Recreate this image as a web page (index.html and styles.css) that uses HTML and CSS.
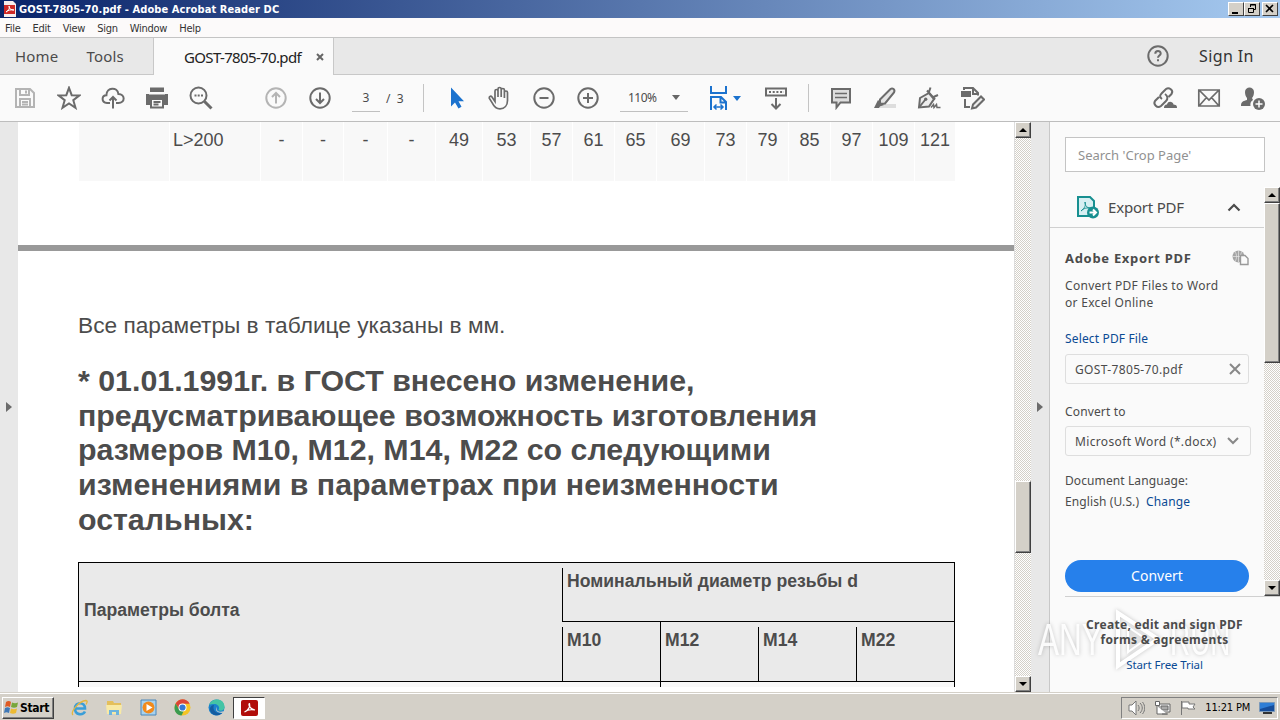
FILE: index.html
```html
<!DOCTYPE html>
<html lang="en">
<head>
    <meta charset="UTF-8">
    <meta name="viewport" content="width=device-width, initial-scale=1.0">
    <title>GOST-7805-70.pdf - Adobe Acrobat Reader DC</title>
    <link rel="stylesheet" href="styles.css">
</head>
<body>

<!-- Title Bar -->
<div class="titlebar">
    <svg class="app-icon" width="12" height="16" viewBox="0 0 12 16"><path fill="#f7eeee" d="M0 0h9l3 3v13H0z"/><path fill="#cf2a27" d="M0 4h11v9H0z"/><path fill="none" stroke="#fff" d="M2 11c3-2 4-4 3-6 0 3 2 4 5 4-3-.5-6 0-8 2z"/></svg>
    <span class="title-text">GOST-7805-70.pdf - Adobe Acrobat Reader DC</span>
    <div class="win-buttons">
        <span class="win-btn"><svg width="13" height="12"><path d="M3 9h6v2H3z"/></svg></span>
        <span class="win-btn"><svg width="13" height="12"><path fill="none" stroke="#000" d="M5.500 4V1.500h5v5H9M5 2h6M3.500 5.500h5v4h-5zM3 5.500h6"/></svg></span>
        <span class="win-btn close"><svg width="13" height="12"><path fill="none" stroke="#000" stroke-width="1.600" d="M3 2l7 7M10 2L3 9"/></svg></span>
    </div>
</div>

<!-- Menu -->
<div class="menubar">
    <span>File</span><span>Edit</span><span>View</span><span>Sign</span><span>Window</span><span>Help</span>
</div>

<!-- Tabs -->
<div class="tabs">
    <div class="tabs-left"><span class="home">Home</span><span class="tools-tab">Tools</span></div>
    <div class="tab-active"><span class="tab-name">GOST-7805-70.pdf</span><svg width="8" height="8" viewBox="0 0 8 8"><path d="M1 1l6 6M7 1L1 7" stroke="#666" stroke-width="2"/></svg></div>
    <div class="tabs-right">
        <svg class="ico" width="24" height="24" viewBox="0 0 24 24"><circle cx="12" cy="12" r="9.700"/><path d="M9.300 9.700c0-3.500 5.400-3.500 5.400-.2 0 2-2.700 2.200-2.700 4.300M12 15.300v2"/></svg>
        <span class="signin">Sign In</span>
    </div>
</div>

<!-- Toolbar -->
<div class="toolbar">
    <div class="tool-group files">
        <span class="tool light"><svg class="ico" width="24" height="24" viewBox="0 0 24 24"><path d="M3 3h14l4 4v14H3zM7 3v6h9V3M7 21v-8h10v8M13 4.500v3M9 16h6M9 18.500h6"/></svg></span>
        <span class="tool"><svg class="ico" width="24" height="24" viewBox="0 0 24 24"><path d="M12 1.800l2.700 7.400 7.800.2-6.200 4.800 2.200 7.600L12 17.400l-6.500 4.400 2.200-7.600L1.500 9.400l7.800-.2z"/></svg></span>
        <span class="tool"><svg class="ico" width="24" height="24" viewBox="0 0 24 24"><path d="M9 17H6c-6-.5-5.500-7.600-.6-7.800C5.500 1 16.500.500 17.400 8c7 .2 7 9 0 9H15M12 22.500V11M8.500 14.500L12 11l3.500 3.500"/></svg></span>
        <span class="tool"><svg class="ico" width="24" height="24" viewBox="0 0 24 24"><path class="solid" d="M5 1.500h14V6H5zM1 8h22v11h-4v-4H5v4H1z"/><path fill="#fafafa" d="M6 13h12v8.500H6z"/><path class="cut" d="M4 8h16"/><path d="M8.500 16h7M8.500 18.500h5"/></svg></span>
        <span class="tool"><svg class="ico" width="24" height="24" viewBox="0 0 24 24"><circle cx="9.500" cy="9.500" r="8"/><path d="M5.500 9.500h2M8.700 9.500h2M12 9.500h2"/><path stroke-width="3" d="M15.500 15.500l7 7"/></svg></span>
    </div>
    <div class="tool-group nav">
        <span class="tool light"><svg class="ico" width="24" height="24" viewBox="0 0 24 24"><circle cx="12" cy="12" r="9.700"/><path d="M12 17.500V7M8 11l4-4 4 4"/></svg></span>
        <span class="tool"><svg class="ico" width="24" height="24" viewBox="0 0 24 24"><circle cx="12" cy="12" r="9.700"/><path d="M12 6.500V17M8 13l4 4 4-4"/></svg></span>
        <span class="page-input">3</span><span class="page-total">/&nbsp; 3</span>
    </div>
    <span class="sep"></span>
    <div class="tool-group view">
        <span class="tool"><svg width="24" height="24" viewBox="0 0 24 24"><path fill="#1b72ce" d="M7 1.500v19l4-4 3.500 6 3-1.700-3-5.500H20z"/></svg></span>
        <span class="tool"><svg class="ico" width="24" height="24" viewBox="0 0 24 24"><path stroke-width="1.700" d="M7 15.500V5c0-2 3-2 3 0v6V3c0-2 3.200-2 3.200 0v8V4c0-2 3.200-2 3.200 0v8V6.500c0-2 3.100-2 3.100 0v8c0 5-3 8.300-7.500 8.300-4 0-6-2.300-7.500-5.500L1.400 12.500c-.6-2 1.300-3 2.600-1.500z"/></svg></span>
        <span class="tool"><svg class="ico" width="24" height="24" viewBox="0 0 24 24"><circle cx="12" cy="12" r="9.700"/><path d="M7.500 12h9"/></svg></span>
        <span class="tool"><svg class="ico" width="24" height="24" viewBox="0 0 24 24"><circle cx="12" cy="12" r="9.700"/><path d="M7 12h10M12 7v10"/></svg></span>
        <span class="zoom-box"><span>110%</span><i class="caret"></i></span>
        <span class="fit"><svg width="20" height="26" viewBox="0 0 20 26" fill="none" stroke="#1b72ce" stroke-width="2"><path d="M2 1v7h15V1M2 25V12h10l5 5v8M11.500 12v5.500H17"/><path stroke-width="1.500" d="M5 22h9M7.500 19.500L5 22l2.500 2.500M11.500 19.500L14 22l-2.500 2.500"/></svg><i class="caret blue"></i></span>
        <span class="tool"><svg class="ico" width="24" height="24" viewBox="0 0 24 24"><path d="M2 2.500h20v7H2zM12 12v10M7.500 18l4.500 4.500 4.500-4.500"/><path stroke-dasharray="2 1.700" d="M5 6h15"/></svg></span>
    </div>
    <span class="sep"></span>
    <div class="tool-group edit">
        <span class="tool"><svg class="ico" width="24" height="24" viewBox="0 0 24 24"><path fill="#ddd" d="M3 3h18v13.500H11.500l-4 5v-5H3z"/><path stroke-width="1.500" d="M6 7.500h12M6 11.500h12"/></svg></span>
        <span class="tool"><svg class="ico" width="24" height="24" viewBox="0 0 24 24"><path fill="#ddd" stroke="none" d="M11 18h12v4H6z"/><path fill="#e4e4e4" d="M7 13.500L17.500 3c2-1.500 5 .5 3.500 3.500L12 17.500l-5 .5z"/><path class="solid" d="M5 14l6 5-4 1.500-1 1.500H1z"/></svg></span>
        <span class="tool"><svg class="ico" width="24" height="24" viewBox="0 0 24 24"><path fill="#eee" d="M2 21.500L3 12l9-5 5 6-5 7.500z"/><path d="M2 21.500l6-7.500M10 4.500l8 9M12 6l1.500-4.500M16.500 11L21 9"/><circle class="solid" cx="8.700" cy="13.300" r="1.700"/><path stroke-width="1.500" d="M14 21.500l2.500-3 .5 3 2.500-3 .5 3h3.500"/></svg></span>
        <span class="tool"><svg class="ico" width="24" height="24" viewBox="0 0 24 24"><path class="solid" d="M0 5h10v6H0z"/><path d="M3 4V2h9l5 5v2.500M12 2v6h5M4 13v8h5"/><path fill="#eee" d="M12 18.500l8-8 3 3-8 8-4 1z"/></svg></span>
    </div>
    <div class="tool-group share">
        <span class="tool"><svg class="ico" width="26" height="24" viewBox="0 0 26 24"><path d="M10 13c-3-2-2-4 0-6l4-4c3-2 8 1 5.500 5l-3 3M13 8c3 2 3 5 1 7l-5 5c-4 3-8-2-6-5l4-4"/><path class="solid" d="M12 22c0-3 2-3.500 3-3.500 1-4 6-3 6.500 0C25 19 25 20 25 22z"/></svg></span>
        <span class="tool"><svg class="ico" width="24" height="24" viewBox="0 0 24 24"><path stroke-width="1.700" d="M1.800 4h20.400v16H1.800zM2 4l10 10L22 4M2 20l7.500-8.500M22 20l-7.500-8.500"/></svg></span>
        <span class="tool"><svg class="ico" width="26" height="24" viewBox="0 0 26 24"><path class="solid" d="M5 6c0-6 9-6 9 0 0 3-1 5-2 6l1 2c-2 1-3 3-2.500 6H1c0-5 3-5 6-6v-2C6 11 5 9 5 6z"/><circle class="solid" cx="19" cy="18" r="6"/><path stroke="#fff" stroke-width="1.500" d="M19 14.500v7M15.500 18h7"/></svg></span>
    </div>
</div>

<div class="main">
    <div class="gutter left"><i class="arrow-r"></i></div>

    <!-- Document -->
    <div class="document">
        <div class="size-row">
            <span></span><span class="first">L&gt;200</span><span>-</span><span>-</span><span>-</span><span>-</span><span>49</span><span>53</span><span>57</span><span>61</span><span>65</span><span>69</span><span>73</span><span>79</span><span>85</span><span>97</span><span>109</span><span>121</span>
        </div>
        <div class="page-break"></div>
        <p class="note">Все параметры в таблице указаны в мм.</p>
        <h2>* 01.01.1991г. в ГОСТ внесено изменение,<br>предусматривающее возможность изготовления<br>размеров М10, М12, М14, М22 со следующими<br>изменениями в параметрах при неизменности<br>остальных:</h2>
        <div class="bolt-table">
            <div class="param">Параметры болта</div>
            <div class="diameter">Номинальный диаметр резьбы d</div>
            <div class="m">М10</div><div class="m joined">М12</div><div class="m">М14</div><div class="m">М22</div>
        </div>
        <div class="bolt-next"><span></span></div>
    </div>
    <div class="scrollbar doc-scroll">
        <span class="sb-btn"><i class="up"></i></span>
        <span class="thumb"></span>
        <span class="sb-btn bottom"><i class="down"></i></span>
    </div>
    <div class="gutter right"><i class="arrow-r"></i></div>

    <!-- Right Panel -->
    <div class="panel">
        <div class="search">Search 'Crop Page'</div>
        <div class="panel-body">
            <div class="panel-content">
                <div class="export-head">
                    <svg width="24" height="24" viewBox="0 0 24 24"><path d="M2 2h12l4 4v15H2z" fill="#d7eff2" stroke="#178f90" stroke-width="2"/><path d="M5 16c4-3 5-6 4-9 0 4 2 6 6 6-4-.5-7 0-10 3z" fill="none" stroke="#178f90"/><circle cx="17" cy="17.500" r="6" fill="#178f90"/><path d="M13.500 17.500h6M17 14.500l3 3-3 3" stroke="#fff" stroke-width="2" fill="none"/></svg>
                    <span>Export PDF</span>
                    <svg class="chev" width="14" height="9" viewBox="0 0 14 9"><path d="M1.500 7.500L7 2l5.500 5.500" fill="none" stroke="#4b4b4b" stroke-width="2.200"/></svg>
                </div>
                <div class="export-form">
                    <div class="form-title"><b>Adobe Export PDF</b><svg width="17" height="16" viewBox="0 0 17 16"><circle cx="6.500" cy="6.500" r="6" fill="#a5a5a5"/><path d="M.5 6.500h12M6.500 0v12M3 1.500c2 3 2 7 0 10M10 1.500c-2 3-2 7 0 10" stroke="#e6e6e6" stroke-width=".7" fill="none"/><path d="M8.500 5.500H13l3 3v6H8.500z" fill="#fafafa" stroke="#999" stroke-width="1.400"/></svg></div>
                    <p class="intro">Convert PDF Files to Word<br>or Excel Online</p>
                    <a class="select-link">Select PDF File</a>
                    <div class="field file"><span>GOST-7805-70.pdf</span><svg width="12" height="12" viewBox="0 0 12 12"><path d="M1 1l10 10M11 1L1 11" stroke="#888" stroke-width="2"/></svg></div>
                    <p class="label">Convert to</p>
                    <div class="field format"><span>Microsoft Word (*.docx)</span><svg width="12" height="8" viewBox="0 0 12 8"><path d="M1 1l5 5 5-5" fill="none" stroke="#888" stroke-width="2"/></svg></div>
                    <p class="language">Document Language:<br><span>English (U.S.)</span><a>Change</a></p>
                    <div class="convert">Convert</div>
                </div>
            </div>
            <div class="scrollbar side-scroll">
                <span class="sb-btn"><i class="up"></i></span>
                <span class="thumb"></span>
                <span class="sb-btn bottom"><i class="down"></i></span>
            </div>
        </div>
        <div class="promo">
            <b>Create, edit and sign PDF<br>forms &amp; agreements</b>
            <a>Start Free Trial</a>
        </div>
    </div>
</div>

<!-- Watermark -->
<div class="watermark">
    <span>ANY</span>
    <svg width="48" height="64" viewBox="0 0 48 64"><path d="M4 5l40 26L4 58z" fill="none" stroke="#fff" stroke-width="4"/><path d="M14 19l18 12-18 13z" fill="rgba(225,225,225,.4)" stroke="#fff" stroke-width="2"/></svg>
    <span>RUN</span>
</div>

<!-- Taskbar -->
<div class="taskbar">
    <div class="start"><svg width="15" height="15" viewBox="0 0 15 15"><path fill="#df5b24" d="M2 2c2-1.500 4-1 5 0L6 7C4 6 3 6 1 7z"/><path fill="#78a63a" d="M8 2.500c2 1 4 1 6 0L13 7c-2 1-4 1-6 0z"/><path fill="#3f78b7" d="M1 8c2-1 3-1 5 0l-1 5c-2-1-3-1-5 0z"/><path fill="#edba32" d="M7 8.500c2 1 4 1 6 0L12 13c-2 1-4 1-6 0z"/></svg><b>Start</b></div>
    <div class="quick">
        <span><svg width="18" height="18" viewBox="0 0 18 18"><path d="M14 12.500c-2 4-10 4-10-3 0-7 10-7 10 0H5" fill="none" stroke="#3a9ed8" stroke-width="2.600"/><path d="M2 16C-1 13 8 2 15 1.500c2 .5 1 2 0 4" fill="none" stroke="#e5b63e" stroke-width="1.300"/></svg></span>
        <span><svg width="18" height="18" viewBox="0 0 18 18"><path fill="#e4bf5b" d="M2 2h6l1 2h7v11H2z"/><path fill="#f8e9a5" d="M1 6h16l-1 9H2z"/><path fill="#6fb4dd" d="M4 16v-5h10v5h-3v-3H7v3z"/></svg></span>
        <span><svg width="17" height="17" viewBox="0 0 17 17"><path fill="#a6d1ee" stroke="#4a86b8" d="M1 1h15v15H1z"/><circle cx="8.500" cy="8.500" r="6" fill="#f18a1c"/><path fill="#fff" d="M6.500 5l6 3.500-6 3.500z"/></svg></span>
        <span><svg width="17" height="17" viewBox="0 0 17 17"><circle cx="8.500" cy="8.500" r="8" fill="#f4c426"/><path fill="#db4437" d="M1.600 4.500C5-1.500 13-1 15.600 4.700H8.500L5 10z"/><path fill="#3b9b50" d="M1.600 4.500L5.500 11l4 1.500-2 4C1 16-1 9.500 1.600 4.500z"/><circle cx="8.500" cy="8.500" r="4" fill="#fff"/><circle cx="8.500" cy="8.500" r="3.100" fill="#3478d4"/></svg></span>
        <span><svg width="17" height="17" viewBox="0 0 17 17"><circle cx="8.500" cy="8.500" r="8" fill="#1b81cc"/><path fill="#44c4a5" d="M1 6C4-2 17-1 16.500 8.500c0 3-4 4-6 2.500 2-3-1-6-4-6-2 0-4 0-5.500 1z"/><path fill="#155ca0" d="M6 6c-2 5 2 9 8 8-5 5-13 1-12-5 1-2 2-3 4-3z"/><path fill="#d5d0c8" d="M9 8c-2 4 3 6 7 4l-1.500 2C10 14 6 11 9 8z"/></svg></span>
        <span class="running"><svg width="17" height="16" viewBox="0 0 17 16"><rect width="17" height="16" rx="2" fill="#b10d0a"/><path d="M3.500 12c4-1.500 6-6 5-8.500-1.500 0 0 6 5.500 6.500-4-1-8 0-10.500 2z" fill="none" stroke="#fff" stroke-width="1.200"/></svg></span>
    </div>
    <div class="tray">
        <svg width="17" height="16" viewBox="0 0 17 16" fill="none" stroke="#777"><path fill="#fff" d="M1 5h3l4-4v14l-4-4H1z"/><path d="M10 5c1.500 2 1.500 4 0 6M12 3c3 3 3 7 0 10M14.500 2c3 4 3 8 0 12"/></svg>
        <svg width="17" height="16" viewBox="0 0 17 16" stroke="#666"><path fill="#eee" d="M5 4h11v8H5z"/><path fill="#aaa" d="M7 6h7v4H7z"/><path fill="#fff" d="M1.500 1.500h4v4h-4zM3 6v8h10M8 14h6"/></svg>
        <svg width="17" height="16" viewBox="0 0 17 16" stroke="#777"><path fill="#fff" d="M1.500 1v14M2 2h7v2h6l-2 3 2 2H8V8H2z"/></svg>
        <span>11:21 PM</span>
        <svg width="16" height="14" viewBox="0 0 16 14"><path fill="#2f7ed6" stroke="#7a99ba" d="M.5 1.500h15v9H.5z"/><path fill="#174d9a" d="M1 8l14-4v6H1z"/><path fill="#333" d="M4 11h9v2H4z"/></svg>
    </div>
</div>

</body>
</html>
```
FILE: styles.css
```css
/* Basic Reset */
* {
    box-sizing: border-box;
    margin: 0;
    padding: 0;
}

body {
    width: 1280px;
    height: 720px;
    overflow: hidden;
    display: flex;
    flex-direction: column;
    background-color: #fafafa;
    color: #4b4b4b;
    font-family: "Noto Sans", sans-serif;
    white-space: nowrap;
}

svg {
    display: block;
    flex: none;
}

/* Title Bar */
.titlebar {
    height: 18px;
    display: flex;
    align-items: center;
    padding: 0 2px 0 4px;
    background: linear-gradient(90deg, #0a246a, #a6caf0);
    color: #fff;
}

.title-text {
    margin-left: 3px;
    font: bold 11px "DejaVu Sans Condensed", "DejaVu Sans", sans-serif;
    font-stretch: condensed;
    letter-spacing: 0.1px;
}

.win-buttons {
    display: flex;
    margin-left: auto;
}

.win-btn {
    width: 16px;
    height: 14px;
    background-color: #d4d0c8;
    border: 1px solid;
    border-color: #fff #404040 #404040 #fff;
}

.win-btn.close {
    margin-left: 2px;
}

/* Menu */
.menubar {
    height: 20px;
    display: flex;
    gap: 12px;
    padding: 3px 0 0 5px;
    border-bottom: 1px solid #c4c4c4;
    background-color: #fcfafa;
    font: 11px/15px "DejaVu Sans Condensed", "DejaVu Sans", sans-serif;
    font-stretch: condensed;
    letter-spacing: -0.25px;
    color: #333;
}

/* Tabs */
.tabs {
    height: 37px;
    display: flex;
    font-size: 16px;
    line-height: 36px;
    background-color: #e8e8e8;
}

.tabs-left {
    width: 154px;
    padding-left: 15px;
    border-right: 1px solid #c8c8c8;
    border-bottom: 1px solid #c8c8c8;
}

.tools-tab {
    margin-left: 28px;
}

.home,
.tools-tab {
    font-size: 15px;
    letter-spacing: 0.2px;
}

.tab-active {
    width: 179px;
    display: flex;
    align-items: center;
    padding-left: 30px;
    background-color: #fafafa;
    color: #222;
    font-size: 15px;
}

.tab-active svg {
    margin-left: 14px;
}

.tab-name {
    width: 118px;
    letter-spacing: -0.65px;
}

.tabs-right {
    flex: 1;
    display: flex;
    align-items: center;
    justify-content: flex-end;
    padding-right: 26px;
    border-left: 1px solid #c8c8c8;
    border-bottom: 1px solid #c8c8c8;
}

.tabs-right .ico {
    margin-right: 29px;
}

.signin {
    width: 55px;
    font-size: 16px;
    letter-spacing: 0.4px;
    color: #333;
}

/* Toolbar */
.toolbar {
    height: 47px;
    display: flex;
    align-items: center;
    border-bottom: 1px solid #bdbdbd;
    background-color: #fafafa;
}

.ico {
    fill: none;
    stroke: #6b6b6b;
    stroke-width: 2;
}

.ico .solid {
    fill: #6b6b6b;
    stroke: none;
}

.ico .cut {
    stroke: #fafafa;
    stroke-width: 1;
}

.light .ico {
    stroke: #b4b4b4;
}

.tool-group {
    display: flex;
    align-items: center;
}

.tool {
    width: 44px;
    display: flex;
    justify-content: center;
}

.files {
    padding-left: 3px;
}

.nav {
    width: 200px;
    padding-left: 31px;
    font-size: 12px;
}

.page-input {
    width: 28px;
    height: 27px;
    margin-left: 10px;
    line-height: 25px;
    text-align: center;
    border-bottom: 1px solid #c0c0c0;
}

.page-total {
    margin-left: 6px;
}

.sep {
    width: 1px;
    height: 28px;
    background-color: #c4c4c4;
}

.view {
    width: 384px;
    padding-left: 10px;
}

.zoom-box {
    width: 68px;
    height: 28px;
    display: flex;
    align-items: center;
    justify-content: space-between;
    margin-left: 10px;
    padding: 0 8px;
    border-bottom: 1px solid #c0c0c0;
    font-size: 12px;
    letter-spacing: -0.5px;
}

.caret {
    border: 4px solid transparent;
    border-top: 5px solid #666;
    border-bottom: 0;
}

.caret.blue {
    border-top-color: #1b72ce;
}

.fit {
    width: 66px;
    display: flex;
    align-items: center;
    gap: 4px;
    padding-left: 21px;
}

.edit {
    padding-left: 10px;
}

.share {
    margin-left: auto;
    padding-right: 5px;
}

/* Main Area */
.main {
    height: 570px;
    display: flex;
}

.gutter {
    width: 18px;
    display: flex;
    align-items: center;
    justify-content: center;
    background-color: #e8e8e8;
}

.gutter.right {
    width: 19px;
    border-right: 1px solid #c8c8c8;
}

.arrow-r {
    border: 5px solid transparent;
    border-left: 6px solid #6b6b6b;
    border-right: 0;
}

/* Document */
.document {
    width: 996px;
    overflow: hidden;
    background-color: #fff;
    font-family: "Liberation Sans", Arial, sans-serif;
    color: #4c4c4c;
}

.size-row {
    height: 59px;
    display: grid;
    grid-template-columns: 91px 91px 42px 41px 44px 48px 47px 48px 42px 42px 42px 48px 42px 42px 42px 42px 42px 41px;
    margin: 0 0 64px 61px;
    font-size: 18px;
    line-height: 36px;
    text-align: center;
}

.size-row span {
    background-color: #f8f8f8;
    border-right: 1px solid #fff;
}

.size-row .first {
    padding-left: 3px;
    text-align: left;
}

.page-break {
    height: 6px;
    background-color: #999;
}

.note {
    margin: 60px 0 0 60px;
    font-size: 22.7px;
    line-height: 28px;
}

h2 {
    margin: 25px 0 24px 60px;
    font-size: 30.35px;
    line-height: 34.7px;
}

.bolt-table {
    width: 877px;
    height: 120px;
    display: grid;
    grid-template-columns: 483px repeat(4, 98px);
    grid-template-rows: 59px 59px;
    margin-left: 60px;
    border: 1px solid #000;
    background-color: #eaeaea;
    font-size: 17.6px;
    font-weight: bold;
}

.param {
    grid-row: span 2;
    padding: 37px 0 0 5px;
}

.diameter {
    grid-column: span 4;
    padding: 8px 0 0 5px;
    border-bottom: 1px solid #000;
}

.m {
    padding: 8px 0 0 5px;
}

/* Left rules start a few pixels under the row line */
.diameter,
.m {
    background: linear-gradient(#000, #000) 0 5px / 1px 100% no-repeat;
}

.m.joined {
    background-position: 0 0;
}

.bolt-next {
    width: 877px;
    height: 5px;
    display: flex;
    margin-left: 60px;
    background-color: #f8f8f8;
    border: 1px solid #000;
    border-width: 0 1px;
}

.bolt-next span {
    width: 582px;
    border-right: 1px solid #000;
}

/* Scrollbars */
.scrollbar {
    display: flex;
    flex-direction: column;
    background: repeating-conic-gradient(#d4d0c8 0 25%, #fff 0 50%) 0 0 / 2px 2px;
}

.sb-btn,
.thumb {
    flex: none;
    background-color: #d4d0c8;
    border: 1px solid;
    border-color: #fff #404040 #404040 #fff;
    box-shadow: inset -1px -1px #808080;
}

.sb-btn {
    height: 16px;
    display: flex;
    align-items: center;
    justify-content: center;
}

.sb-btn.bottom {
    margin-top: auto;
}

.up,
.down {
    border: 4px solid transparent;
}

.up {
    border-top: 0;
    border-bottom-color: #000;
}

.down {
    border-bottom: 0;
    border-top-color: #000;
}

.doc-scroll {
    width: 17px;
    border-left: 1px solid #ddd;
}

.doc-scroll .thumb {
    height: 72px;
    margin-top: 343px;
}

.side-scroll {
    width: 16px;
}

.side-scroll .thumb {
    height: 160px;
}

/* Right Panel */
.panel {
    width: 230px;
    background-color: #fafafa;
}

.search {
    width: 200px;
    height: 35px;
    margin: 15px 0 15px 15px;
    padding-left: 12px;
    border: 1px solid #c4c4c4;
    background-color: #fff;
    color: #919191;
    font-size: 13px;
    line-height: 34px;
}

.panel-body {
    height: 409px;
    display: flex;
}

.panel-content {
    width: 214px;
}

.export-head {
    height: 41px;
    display: flex;
    align-items: center;
    padding: 0 23px 0 26px;
    border-bottom: 1px solid #d0d0d0;
    font-size: 15px;
}

.export-head span {
    margin-left: 8px;
    letter-spacing: -0.2px;
}

.chev {
    margin-left: auto;
}

.export-form {
    padding: 20px 0 0 15px;
    font-size: 12px;
    line-height: 17px;
}

.form-title {
    width: 184px;
    height: 20px;
    display: flex;
    align-items: center;
    justify-content: space-between;
    font-size: 13px;
    letter-spacing: 0.7px;
}

.intro {
    margin-top: 9px;
    letter-spacing: 0.3px;
}

.select-link {
    display: block;
    margin-top: 19px;
    letter-spacing: 0.15px;
}

a {
    color: #0a4a94;
}

.field {
    width: 184px;
    height: 30px;
    display: flex;
    align-items: center;
    justify-content: space-between;
    margin-top: 7px;
    padding: 0 7px 0 9px;
    border: 1px solid #dedede;
    border-radius: 3px;
    letter-spacing: 0.35px;
}

.field.format {
    width: 186px;
    margin-top: 6px;
    padding-right: 11px;
}

.label {
    margin-top: 19px;
    letter-spacing: 0.15px;
}

.language {
    margin-top: 14px;
    line-height: 21px;
    letter-spacing: 0.1px;
}

.language a {
    margin-left: 7px;
}

.convert {
    width: 184px;
    height: 32px;
    margin-top: 48px;
    border-radius: 16px;
    background-color: #2680eb;
    color: #fff;
    font-size: 14px;
    line-height: 32px;
    text-align: center;
}

.promo {
    position: relative;
    z-index: 2;
    margin-left: 15px;
    padding-top: 20px;
    border-top: 1px solid #d0d0d0;
    font-size: 12px;
    line-height: 15px;
    text-align: center;
}

.promo b {
    display: block;
    margin-right: 16px;
    letter-spacing: 0.3px;
}

.promo a {
    display: block;
    margin: 10px 16px 0 0;
    font-size: 11.500px;
    letter-spacing: -0.1px;
}

/* Watermark */
.watermark {
    position: absolute;
    left: 1038px;
    top: 608px;
    display: flex;
    align-items: center;
    color: rgba(255, 255, 255, 0.9);
    font: 45px "Liberation Sans", Arial, sans-serif;
    filter: drop-shadow(0 0 2px rgba(0, 0, 0, 0.22));
}

.watermark span {
    width: 76px;
    transform: scaleX(0.7);
    transform-origin: 0 0;
}

.watermark svg + span {
    width: 62px;
    margin-left: 8px;
    transform: scaleX(0.62);
}

/* Taskbar */
.taskbar {
    height: 28px;
    display: flex;
    align-items: center;
    padding: 2px 2px 0;
    border-top: 1px solid #d4d0c8;
    box-shadow: inset 0 1px #fff;
    background-color: #d4d0c8;
    color: #000;
}

.start {
    width: 52px;
    height: 22px;
    display: flex;
    align-items: center;
    gap: 1px;
    padding-left: 1px;
    border: 1px solid;
    border-color: #fff #404040 #404040 #fff;
    box-shadow: inset -1px -1px #808080;
    font: 12px "DejaVu Sans Condensed", "DejaVu Sans", sans-serif;
    font-stretch: condensed;
    letter-spacing: -0.3px;
}

.quick {
    display: flex;
    margin-left: 9px;
}

.quick span {
    width: 34px;
    height: 22px;
    display: flex;
    align-items: center;
    justify-content: center;
}

.quick .running {
    width: 32px;
    background-color: #fff;
    border: 1px solid;
    border-color: #404040 #fff #fff #404040;
}

.tray {
    width: 157px;
    height: 22px;
    display: flex;
    align-items: center;
    justify-content: space-between;
    margin-left: auto;
    padding: 0 2px 0 6px;
    border: 1px solid;
    border-color: #808080 #fff #fff #808080;
    font: 11px "DejaVu Sans Condensed", "DejaVu Sans", sans-serif;
    font-stretch: condensed;
    letter-spacing: -0.15px;
}
```
